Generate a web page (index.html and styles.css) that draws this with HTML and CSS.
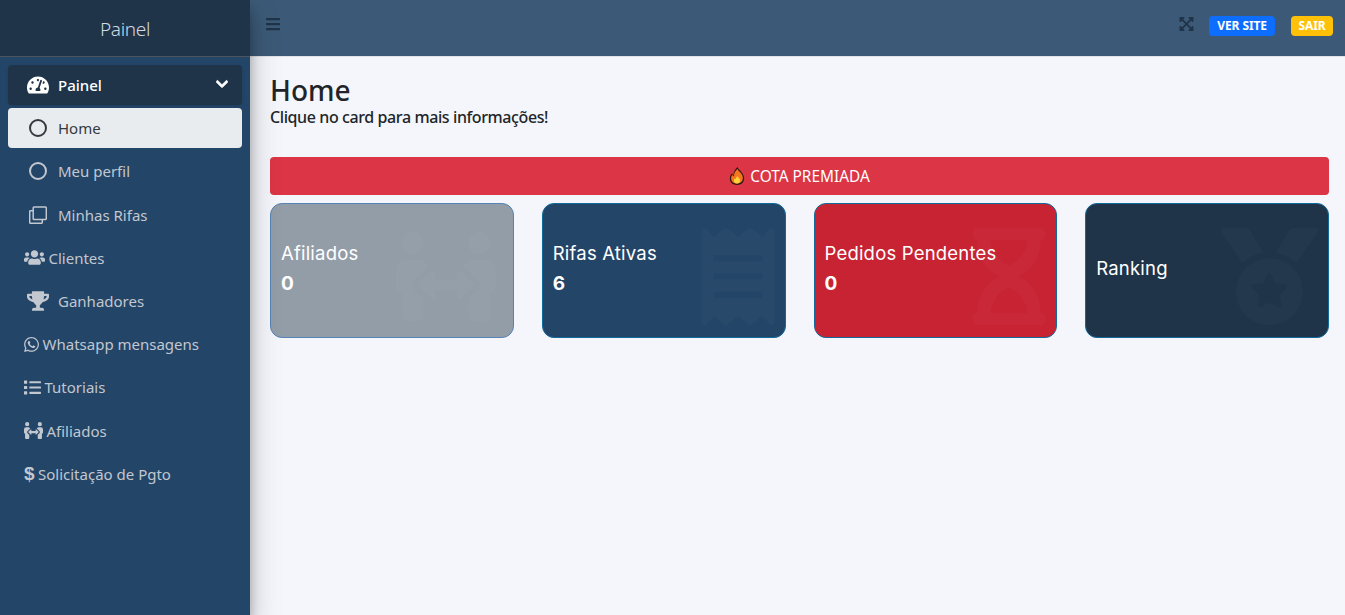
FILE: index.html
```html
<!DOCTYPE html>
<html lang="pt-BR">

<head>
    <meta charset="UTF-8">
    <meta name="viewport" content="width=device-width, initial-scale=1.0">
    <title>Painel</title>
    <link rel="stylesheet" href="styles.css">
</head>

<body>

    <aside class="sidebar">
        <div class="brand">Painel</div>
        <nav class="menu">
            <a class="menu-item menu-open">
                <svg class="nav-icon icon-gauge" viewBox="0 0 576 512"><path d="M288 32C128.94 32 0 160.94 0 320c0 52.8 14.25 102.26 39.06 144.8 5.61 9.62 16.3 15.2 27.44 15.2h443c11.14 0 21.83-5.58 27.44-15.2C561.75 422.26 576 372.8 576 320c0-159.06-128.94-288-288-288zm0 64c14.71 0 26.58 10.13 30.32 23.65-1.11 2.26-2.64 4.23-3.45 6.67l-9.22 27.67c-5.13 3.49-10.97 6.01-17.64 6.01-17.67 0-32-14.33-32-32S270.33 96 288 96zM96 384c-17.67 0-32-14.33-32-32s14.33-32 32-32 32 14.33 32 32-14.33 32-32 32zm48-160c-17.67 0-32-14.33-32-32s14.33-32 32-32 32 14.33 32 32-14.33 32-32 32zm246.77-72.41l-61.33 184C343.13 347.33 352 364.54 352 384c0 11.72-3.38 22.55-8.88 32H232.88c-5.5-9.45-8.88-20.28-8.88-32 0-33.94 26.5-61.43 59.9-63.59l61.34-184.01c4.17-12.56 17.73-19.45 30.36-15.17 12.57 4.19 19.35 17.79 15.17 30.36zm14.66 57.2l15.52-46.55c3.47-1.29 7.13-2.23 11.05-2.23 17.67 0 32 14.33 32 32s-14.33 32-32 32c-11.38-.01-20.89-6.28-26.57-15.22zM480 384c-17.67 0-32-14.33-32-32s14.33-32 32-32 32 14.33 32 32-14.33 32-32 32z"/></svg>
                <span>Painel</span>
                <svg class="chevron" viewBox="0 0 448 512"><path d="M207.029 381.476L12.686 187.132c-9.373-9.373-9.373-24.569 0-33.941l22.667-22.667c9.357-9.357 24.522-9.375 33.901-.04L224 284.505l154.745-154.021c9.379-9.335 24.544-9.317 33.901.04l22.667 22.667c9.373 9.373 9.373 24.569 0 33.941L240.971 381.476c-9.373 9.372-24.569 9.372-33.942 0z"/></svg>
            </a>
            <a class="menu-item sub active">
                <svg class="nav-icon icon-ring" viewBox="0 0 18 18"><circle cx="9" cy="9" r="8"/></svg>
                <span>Home</span>
            </a>
            <a class="menu-item sub">
                <svg class="nav-icon icon-ring" viewBox="0 0 18 18"><circle cx="9" cy="9" r="8"/></svg>
                <span>Meu perfil</span>
            </a>
            <a class="menu-item sub">
                <svg class="nav-icon icon-copy" viewBox="0 0 18 18"><path d="M5 1h11.500a.8.8 0 0 1 .8.8v10.900a.8.8 0 0 1-.8.8H5a.8.8 0 0 1-.8-.8V1.800A.8.8 0 0 1 5 1z"/><path d="M4.200 4.700H1.500a.8.8 0 0 0-.8.8v11a.8.8 0 0 0 .8.8h11a.8.8 0 0 0 .8-.8v-3"/></svg>
                <span>Minhas Rifas</span>
            </a>
            <a class="menu-item plain">
                <svg class="plain-icon w21" viewBox="0 0 640 512"><path d="M96 224c35.3 0 64-28.7 64-64s-28.7-64-64-64-64 28.7-64 64 28.7 64 64 64zm448 0c35.3 0 64-28.7 64-64s-28.7-64-64-64-64 28.7-64 64 28.700 64 64 64zm32 32h-64c-17.6 0-33.500 7.100-45.100 18.600 40.300 22.100 68.900 62 75.100 109.400h66c17.700 0 32-14.300 32-32v-32c0-35.300-28.700-64-64-64zm-256 0c61.900 0 112-50.100 112-112S381.900 32 320 32 208 82.100 208 144s50.100 112 112 112zm76.800 32h-8.300c-20.800 10-43.900 16-68.500 16s-47.600-6-68.500-16h-8.300C179.600 288 128 339.600 128 403.200V432c0 26.500 21.500 48 48 48h288c26.500 0 48-21.500 48-48v-28.800c0-63.600-51.600-115.200-115.200-115.200zm-223.700-13.400C161.500 263.100 145.600 256 128 256H64c-35.300 0-64 28.700-64 64v32c0 17.700 14.300 32 32 32h65.900c6.300-47.400 34.900-87.300 75.200-109.400z"/></svg>
                <span>Clientes</span>
            </a>
            <a class="menu-item sub">
                <svg class="nav-icon icon-trophy" viewBox="0 0 576 512"><path d="M552 64H448V24c0-13.300-10.700-24-24-24H152c-13.300 0-24 10.700-24 24v40H24C10.700 64 0 74.700 0 88v56c0 35.700 22.500 72.400 61.900 100.700 31.500 22.700 69.800 37.100 110 41.700C203.300 338.500 240 360 240 360v72h-48c-35.300 0-64 20.700-64 56v12c0 6.600 5.400 12 12 12h296c6.600 0 12-5.400 12-12v-12c0-35.300-28.700-56-64-56h-48v-72s36.700-21.500 68.100-73.600c40.300-4.600 78.600-19 110-41.700 39.300-28.300 61.900-65 61.900-100.700V88c0-13.300-10.700-24-24-24zM99.300 192.800C74.900 175.200 64 155.600 64 144v-16h64.200c1 32.600 5.800 61.200 12.800 86.200-15.100-5.200-29.200-12.400-41.700-21.400zM512 144c0 16.100-17.700 36.100-35.300 48.800-12.500 9-26.700 16.200-41.800 21.400 7-25 11.800-53.600 12.800-86.200H512v16z"/></svg>
                <span>Ganhadores</span>
            </a>
            <a class="menu-item plain">
                <svg class="plain-icon w15" viewBox="0 0 448 512"><path d="M380.900 97.100C339 55.100 283.200 32 223.900 32c-122.400 0-222 99.600-222 222 0 39.100 10.200 77.300 29.600 111L0 480l117.700-30.900c32.400 17.700 68.900 27 106.100 27h.1c122.300 0 224.100-99.600 224.100-222 0-59.300-25.200-115-67.100-157zm-157 341.600c-33.200 0-65.700-8.900-94-25.700l-6.700-4-69.800 18.300L72 359.200l-4.400-7c-18.500-29.400-28.200-63.300-28.200-98.200 0-101.700 82.800-184.500 184.600-184.500 49.300 0 95.600 19.200 130.400 54.100 34.800 34.900 56.200 81.200 56.100 130.500 0 101.800-84.900 184.600-186.600 184.600zm101.200-138.200c-5.500-2.800-32.800-16.200-37.900-18-5.100-1.900-8.800-2.800-12.500 2.800-3.700 5.600-14.300 18-17.600 21.800-3.200 3.700-6.500 4.200-12 1.400-32.600-16.300-54-29.100-75.500-66-5.700-9.800 5.700-9.100 16.300-30.300 1.800-3.700.9-6.900-.5-9.700-1.400-2.800-12.500-30.100-17.100-41.200-4.500-10.800-9.100-9.300-12.500-9.500-3.200-.2-6.900-.2-10.600-.2-3.700 0-9.700 1.400-14.800 6.900-5.100 5.600-19.400 19-19.400 46.300 0 27.300 19.900 53.700 22.600 57.400 2.800 3.700 39.100 59.700 94.800 83.800 35.200 15.200 49 16.500 66.600 13.900 10.700-1.600 32.800-13.400 37.400-26.400 4.600-13 4.600-24.100 3.200-26.400-1.300-2.500-5-3.900-10.500-6.600z"/></svg>
                <span>Whatsapp mensagens</span>
            </a>
            <a class="menu-item plain">
                <svg class="plain-icon w17" viewBox="0 0 512 512"><path d="M80 368H16a16 16 0 0 0-16 16v64a16 16 0 0 0 16 16h64a16 16 0 0 0 16-16v-64a16 16 0 0 0-16-16zm0-320H16A16 16 0 0 0 0 64v64a16 16 0 0 0 16 16h64a16 16 0 0 0 16-16V64a16 16 0 0 0-16-16zm0 160H16a16 16 0 0 0-16 16v64a16 16 0 0 0 16 16h64a16 16 0 0 0 16-16v-64a16 16 0 0 0-16-16zm416 176H176a16 16 0 0 0-16 16v32a16 16 0 0 0 16 16h320a16 16 0 0 0 16-16v-32a16 16 0 0 0-16-16zm0-320H176a16 16 0 0 0-16 16v32a16 16 0 0 0 16 16h320a16 16 0 0 0 16-16V80a16 16 0 0 0-16-16zm0 160H176a16 16 0 0 0-16 16v32a16 16 0 0 0 16 16h320a16 16 0 0 0 16-16v-32a16 16 0 0 0-16-16z"/></svg>
                <span>Tutoriais</span>
            </a>
            <a class="menu-item plain">
                <svg class="plain-icon w19" viewBox="0 0 576 512"><use href="#people-arrows"/></svg>
                <span>Afiliados</span>
            </a>
            <a class="menu-item plain">
                <span class="dollar">$</span>
                <span>Solicitação de Pgto</span>
            </a>
        </nav>
    </aside>

    <div class="main">
        <header class="topbar">
            <svg class="bars" viewBox="0 0 448 512"><path d="M16 132h416c8.837 0 16-7.163 16-16V76c0-8.837-7.163-16-16-16H16C7.163 60 0 67.163 0 76v40c0 8.837 7.163 16 16 16zm0 160h416c8.837 0 16-7.163 16-16v-40c0-8.837-7.163-16-16-16H16c-8.837 0-16 7.163-16 16v40c0 8.837 7.163 16 16 16zm0 160h416c8.837 0 16-7.163 16-16v-40c0-8.837-7.163-16-16-16H16c-8.837 0-16 7.163-16 16v40c0 8.837 7.163 16 16 16z"/></svg>
            <div class="top-actions">
                <svg class="expand" viewBox="0 0 448 512"><path d="M448 344v112a23.940 23.940 0 0 1-24 24H312c-21.390 0-32.090-25.900-17-41l36.200-36.200L224 295.600 116.770 402.900 153 439c15.090 15.100 4.390 41-17 41H24a23.940 23.940 0 0 1-24-24V344c0-21.400 25.890-32.100 41-17l36.190 36.200L184.460 256 77.180 148.700 41 185c-15.100 15.100-41 4.400-41-17V56a23.940 23.940 0 0 1 24-24h112c21.390 0 32.090 25.900 17 41l-36.200 36.200L224 216.400l107.230-107.300L295 73c-15.090-15.100-4.390-41 17-41h112a23.940 23.940 0 0 1 24 24v112c0 21.400-25.890 32.100-41 17l-36.190-36.200L263.540 256l107.280 107.300L407 327.100c15.100-15.200 41-4.500 41 16.900z"/></svg>
                <a class="badge badge-blue">VER SITE</a>
                <a class="badge badge-yellow">SAIR</a>
            </div>
        </header>

        <main class="content">
            <h1>Home</h1>
            <p class="lead">Clique no card para mais informações!</p>

            <a class="banner">
                <svg class="flame" viewBox="0 0 18 22">
                    <path class="flame-line" d="M9.500 1c.8 2.600 3 3.700 5 6.300 1.700 2.200 2.500 4.300 2.500 6.500 0 4.300-3.300 7.200-8 7.200s-8-2.900-8-7c0-2.600 1.100-4.500 2.500-6 .2 1.200.6 2 1.500 2.600C5 6.500 6.800 3.300 9.500 1z"/>
                    <path class="flame-mid" d="M9.500 3.200c.9 2.200 2.700 3.100 4.200 5.100 1.300 1.700 1.900 3.500 1.900 5.300 0 3.500-2.700 5.900-6.600 5.900s-6.600-2.400-6.600-5.700c0-1.700.6-3.100 1.300-4.100.4 1 1 1.500 2 1.800-.4-3.100 1-5.900 3.800-8.300z"/>
                    <path class="flame-core" d="M9.300 11c.5 1.500 3.200 2.600 3.200 5.100 0 2-1.500 3.400-3.500 3.400s-3.500-1.400-3.500-3.300c0-1.300.6-2.200 1.200-2.800.2.500.5.800 1 1 .1-1.400.9-2.500 1.600-3.400z"/>
                </svg>
                COTA PREMIADA
            </a>

            <section class="cards">
                <a class="card card-gray">
                    <div class="card-text">
                        <h3>Afiliados</h3>
                        <b>0</b>
                    </div>
                    <svg class="card-icon wide" viewBox="0 0 576 512"><use href="#people-arrows"/></svg>
                </a>
                <a class="card card-blue">
                    <div class="card-text">
                        <h3>Rifas Ativas</h3>
                        <b>6</b>
                    </div>
                    <svg class="card-icon" viewBox="0 0 384 512"><path d="M358.400 3.200L320 48 265.600 3.200a15.900 15.900 0 0 0-19.200 0L192 48 137.600 3.200a15.900 15.900 0 0 0-19.200 0L64 48 25.600 3.200C15-4.700 0 2.800 0 16v480c0 13.200 15 20.700 25.600 12.800L64 464l54.400 44.800a15.900 15.900 0 0 0 19.200 0L192 464l54.400 44.800a15.900 15.900 0 0 0 19.200 0L320 464l38.400 44.800c10.500 7.900 25.600.4 25.600-12.800V16c0-13.200-15-20.700-25.600-12.800zM320 360c0 4.400-3.600 8-8 8H72c-4.400 0-8-3.600-8-8v-16c0-4.400 3.600-8 8-8h240c4.400 0 8 3.600 8 8v16zm0-96c0 4.400-3.600 8-8 8H72c-4.400 0-8-3.600-8-8v-16c0-4.400 3.600-8 8-8h240c4.400 0 8 3.600 8 8v16zm0-96c0 4.400-3.600 8-8 8H72c-4.400 0-8-3.600-8-8v-16c0-4.400 3.600-8 8-8h240c4.400 0 8 3.600 8 8v16z"/></svg>
                </a>
                <a class="card card-red">
                    <div class="card-text">
                        <h3>Pedidos Pendentes</h3>
                        <b>0</b>
                    </div>
                    <svg class="card-icon" viewBox="0 0 384 512"><path fill-rule="evenodd" d="M360 64c13.255 0 24-10.745 24-24V24c0-13.255-10.745-24-24-24H24C10.745 0 0 10.745 0 24v16c0 13.255 10.745 24 24 24 0 90.965 51.016 167.734 120.842 192C75.016 280.266 24 357.035 24 448c-13.255 0-24 10.745-24 24v16c0 13.255 10.745 24 24 24h336c13.255 0 24-10.745 24-24v-16c0-13.255-10.745-24-24-24 0-90.965-51.016-167.734-120.842-192C308.984 231.734 360 154.965 360 64zM96 64h192c0 50-40 110-96 134-56-24-96-84-96-134zm0 384c0-50 40-110 96-134 56 24 96 84 96 134z"/></svg>
                </a>
                <a class="card card-navy">
                    <div class="card-text">
                        <h3>Ranking</h3>
                    </div>
                    <svg class="card-icon wider" viewBox="0 0 512 512"><path d="M223.750 130.750L154.620 15.540A31.997 31.997 0 0 0 127.180 0H16.030C3.080 0-4.500 14.570 2.920 25.180l111.270 158.960c29.720-27.770 67.520-46.830 109.560-53.390zM495.970 0H384.820c-11.240 0-21.660 5.900-27.440 15.540l-69.130 115.210c42.040 6.560 79.840 25.620 109.560 53.380L509.080 25.180C516.500 14.570 508.920 0 495.970 0zM256 160c-97.200 0-176 78.800-176 176s78.800 176 176 176 176-78.800 176-176-78.800-176-176-176zm92.520 157.260l-37.930 36.960 8.970 52.220c1.600 9.360-8.260 16.510-16.650 12.090L256 393.880l-46.900 24.650c-8.400 4.450-18.250-2.740-16.650-12.090l8.970-52.220-37.930-36.960c-6.820-6.640-3.050-18.230 6.350-19.590l52.430-7.640 23.430-47.520c1.710-3.430 5.040-5.180 8.370-5.180 3.350 0 6.680 1.740 8.370 5.180l23.430 47.520 52.430 7.640c9.400 1.360 13.170 12.950 6.350 19.590z"/></svg>
                </a>
            </section>
        </main>
    </div>

    <svg class="sprite">
        <symbol id="people-arrows" viewBox="0 0 576 512">
            <path d="M96,128A64,64,0,1,0,32,64,64,64,0,0,0,96,128Zm0,176.080a44.110,44.110,0,0,1,13.640-32L181.770,204c1.650-1.550,3.770-2.310,5.610-3.570A63.910,63.910,0,0,0,128,160H64A64,64,0,0,0,0,224V320a32,32,0,0,0,32,32V480a32,32,0,0,0,32,32h64a32,32,0,0,0,32-32V383.610l-50.360-47.530A44.080,44.080,0,0,1,96,304.080ZM480,128a64,64,0,1,0-64-64A64,64,0,0,0,480,128Zm32,32H448a63.910,63.910,0,0,0-59.380,40.420c1.840,1.270,4,2,5.620,3.590l72.120,68.060a44.370,44.370,0,0,1,0,64L416,383.620V480a32,32,0,0,0,32,32h64a32,32,0,0,0,32-32V352a32,32,0,0,0,32-32V224A64,64,0,0,0,512,160ZM444.400,295.340l-72.120-68.060A12,12,0,0,0,352,236v36H224V236a12,12,0,0,0-20.280-8.730L131.600,295.340a12.400,12.400,0,0,0,0,17.470l72.120,68.070A12,12,0,0,0,224,372.140V336H352v36.140a12,12,0,0,0,20.280,8.740l72.120-68.070A12.400,12.400,0,0,0,444.400,295.340Z"/>
        </symbol>
    </svg>

</body>

</html>
```

FILE: styles.css
```css
html,
body {
    margin: 0;
    height: 100%;
    overflow: hidden;
}

body {
    display: flex;
    background-color: #f4f6fb;
    color: #212529;
    font-family: "Noto Sans", "Open Sans", sans-serif;
    font-size: 15px;
}

a {
    color: inherit;
    text-decoration: none;
}

.sprite {
    display: none;
}

/* sidebar */
.sidebar {
    width: 250px;
    flex-shrink: 0;
    background-color: #234567;
    box-shadow: 0 14px 28px rgba(0, 0, 0, .25), 0 10px 10px rgba(0, 0, 0, .22);
    position: relative;
    z-index: 2;
}

.brand {
    height: 57px;
    box-sizing: border-box;
    background-color: #1f3449;
    border-bottom: 1px solid #4b545c;
    color: #d3d9e0;
    font-size: 19px;
    font-weight: 300;
    letter-spacing: -.3px;
    line-height: 58px;
    text-align: center;
}

.menu {
    display: flex;
    flex-direction: column;
    padding: 8px 8px 0;
}

.menu-item {
    display: flex;
    align-items: center;
    height: 40px;
    margin-bottom: 3.2px;
    border-radius: 4px;
    color: #c2c7d0;
    box-sizing: border-box;
}

.menu-item.sub {
    padding-left: 19px;
}

.menu-item.plain {
    padding-left: 16px;
}

.menu-open {
    background-color: #1f3449;
    color: #fff;
    font-weight: 500;
    padding-left: 19px;
    padding-right: 14px;
    box-shadow: 0 1px 3px rgba(0, 0, 0, .12);
}

.menu-item.active {
    background-color: #e9ecef;
    color: #343a40;
}

.nav-icon {
    width: 21px;
    height: 18px;
    margin-right: 10px;
    fill: currentColor;
    flex-shrink: 0;
}

.icon-ring,
.icon-copy {
    fill: none;
    stroke: currentColor;
    stroke-width: 2;
    margin-left: 2px;
    width: 18px;
    margin-right: 11px;
}

.icon-gauge {
    width: 22px;
    height: 20px;
    margin-left: 0;
    margin-right: 9px;
}

.icon-copy {
    stroke-width: 1.500;
}

.icon-trophy {
    width: 22px;
    height: 20px;
    margin-right: 9px;
}

.chevron {
    width: 12px;
    height: 14px;
    fill: #fff;
    stroke: #fff;
    stroke-width: 30;
    margin-left: auto;
    margin-top: -3px;
}

.plain-icon {
    height: 17px;
    margin-right: 3.500px;
    fill: currentColor;
    flex-shrink: 0;
}

.w21 {
    width: 21px;
}

.w15 {
    width: 15px;
}

.w17 {
    width: 17px;
}

.w19 {
    width: 19px;
}

.dollar {
    font-family: "Liberation Sans", sans-serif;
    font-size: 19px;
    font-weight: 700;
    margin-right: 4px;
    width: 10px;
}

/* right side */
.main {
    flex: 1;
    min-width: 0;
}

.topbar {
    display: flex;
    align-items: center;
    height: 57px;
    box-sizing: border-box;
    background-color: #3c5a77;
    border-bottom: 1px solid #dee2e6;
    padding: 0 12px 8px 16px;
}

.bars {
    width: 14px;
    height: 16px;
    fill: #1f3449;
}

.top-actions {
    display: flex;
    align-items: center;
    margin-left: auto;
}

.expand {
    width: 15px;
    height: 16px;
    fill: #1f3449;
    margin-right: 15px;
}

.badge {
    color: #fff;
    font-size: 12px;
    font-weight: 700;
    line-height: 20px;
    letter-spacing: -.1px;
    padding: 0 8px;
    margin-top: 4px;
    border-radius: 4px;
}

.badge-blue {
    background-color: #0d6efd;
    margin-right: 16px;
}

.badge-yellow {
    background-color: #ffc107;
    padding: 0 7.500px;
}

.content {
    padding: 17px 16px 0 20px;
}

h1 {
    margin: 0;
    font-size: 28px;
    font-weight: 500;
    line-height: 33px;
}

.lead {
    margin: 0 0 30px;
    font-size: 16px;
    font-weight: 500;
    line-height: 20px;
    letter-spacing: -.4px;
}

.banner {
    display: flex;
    align-items: center;
    justify-content: center;
    gap: 5px;
    height: 38px;
    background-color: #dc3545;
    border-radius: 4px;
    color: #fff;
    font-size: 15.400px;
    margin-bottom: 8px;
}

.flame {
    width: 16px;
    height: 20px;
}

.flame-line {
    fill: #2b1a10;
}

.flame-mid {
    fill: #f4761f;
}

.flame-core {
    fill: #ffd23c;
}

.cards {
    display: grid;
    grid-template-columns: repeat(4, 1fr);
    gap: 28px;
}

.card {
    display: flex;
    align-items: center;
    justify-content: space-between;
    height: 135px;
    box-sizing: border-box;
    padding: 0 11px 5px 10px;
    border: 1px solid #116a9c;
    border-radius: 12px;
    color: #fff;
    font-family: "Inter", "Noto Sans", sans-serif;
    overflow: hidden;
    position: relative;
}

.card-text {
    position: relative;
    z-index: 1;
}

.card-text h3 {
    margin: 0;
    font-size: 18.500px;
    font-weight: 400;
    line-height: 22px;
    letter-spacing: .2px;
}

.card-text b {
    display: block;
    margin-top: 9px;
    font-size: 19px;
    line-height: 22px;
    font-weight: 700;
}

.card-icon {
    position: absolute;
    top: 24px;
    right: 10px;
    width: 74px;
    height: 97px;
    fill: rgba(255, 255, 255, .025);
}

.card-icon.wide {
    width: 100px;
    right: 17px;
}

.card-icon.wider {
    width: 97px;
}

.card-gray {
    background-color: #939da8;
    border-color: #5583b5;
}

.card-blue {
    background-color: #234567;
}

.card-red {
    background-color: #c72333;
}

.card-navy {
    background-color: #1f3449;
}
```
